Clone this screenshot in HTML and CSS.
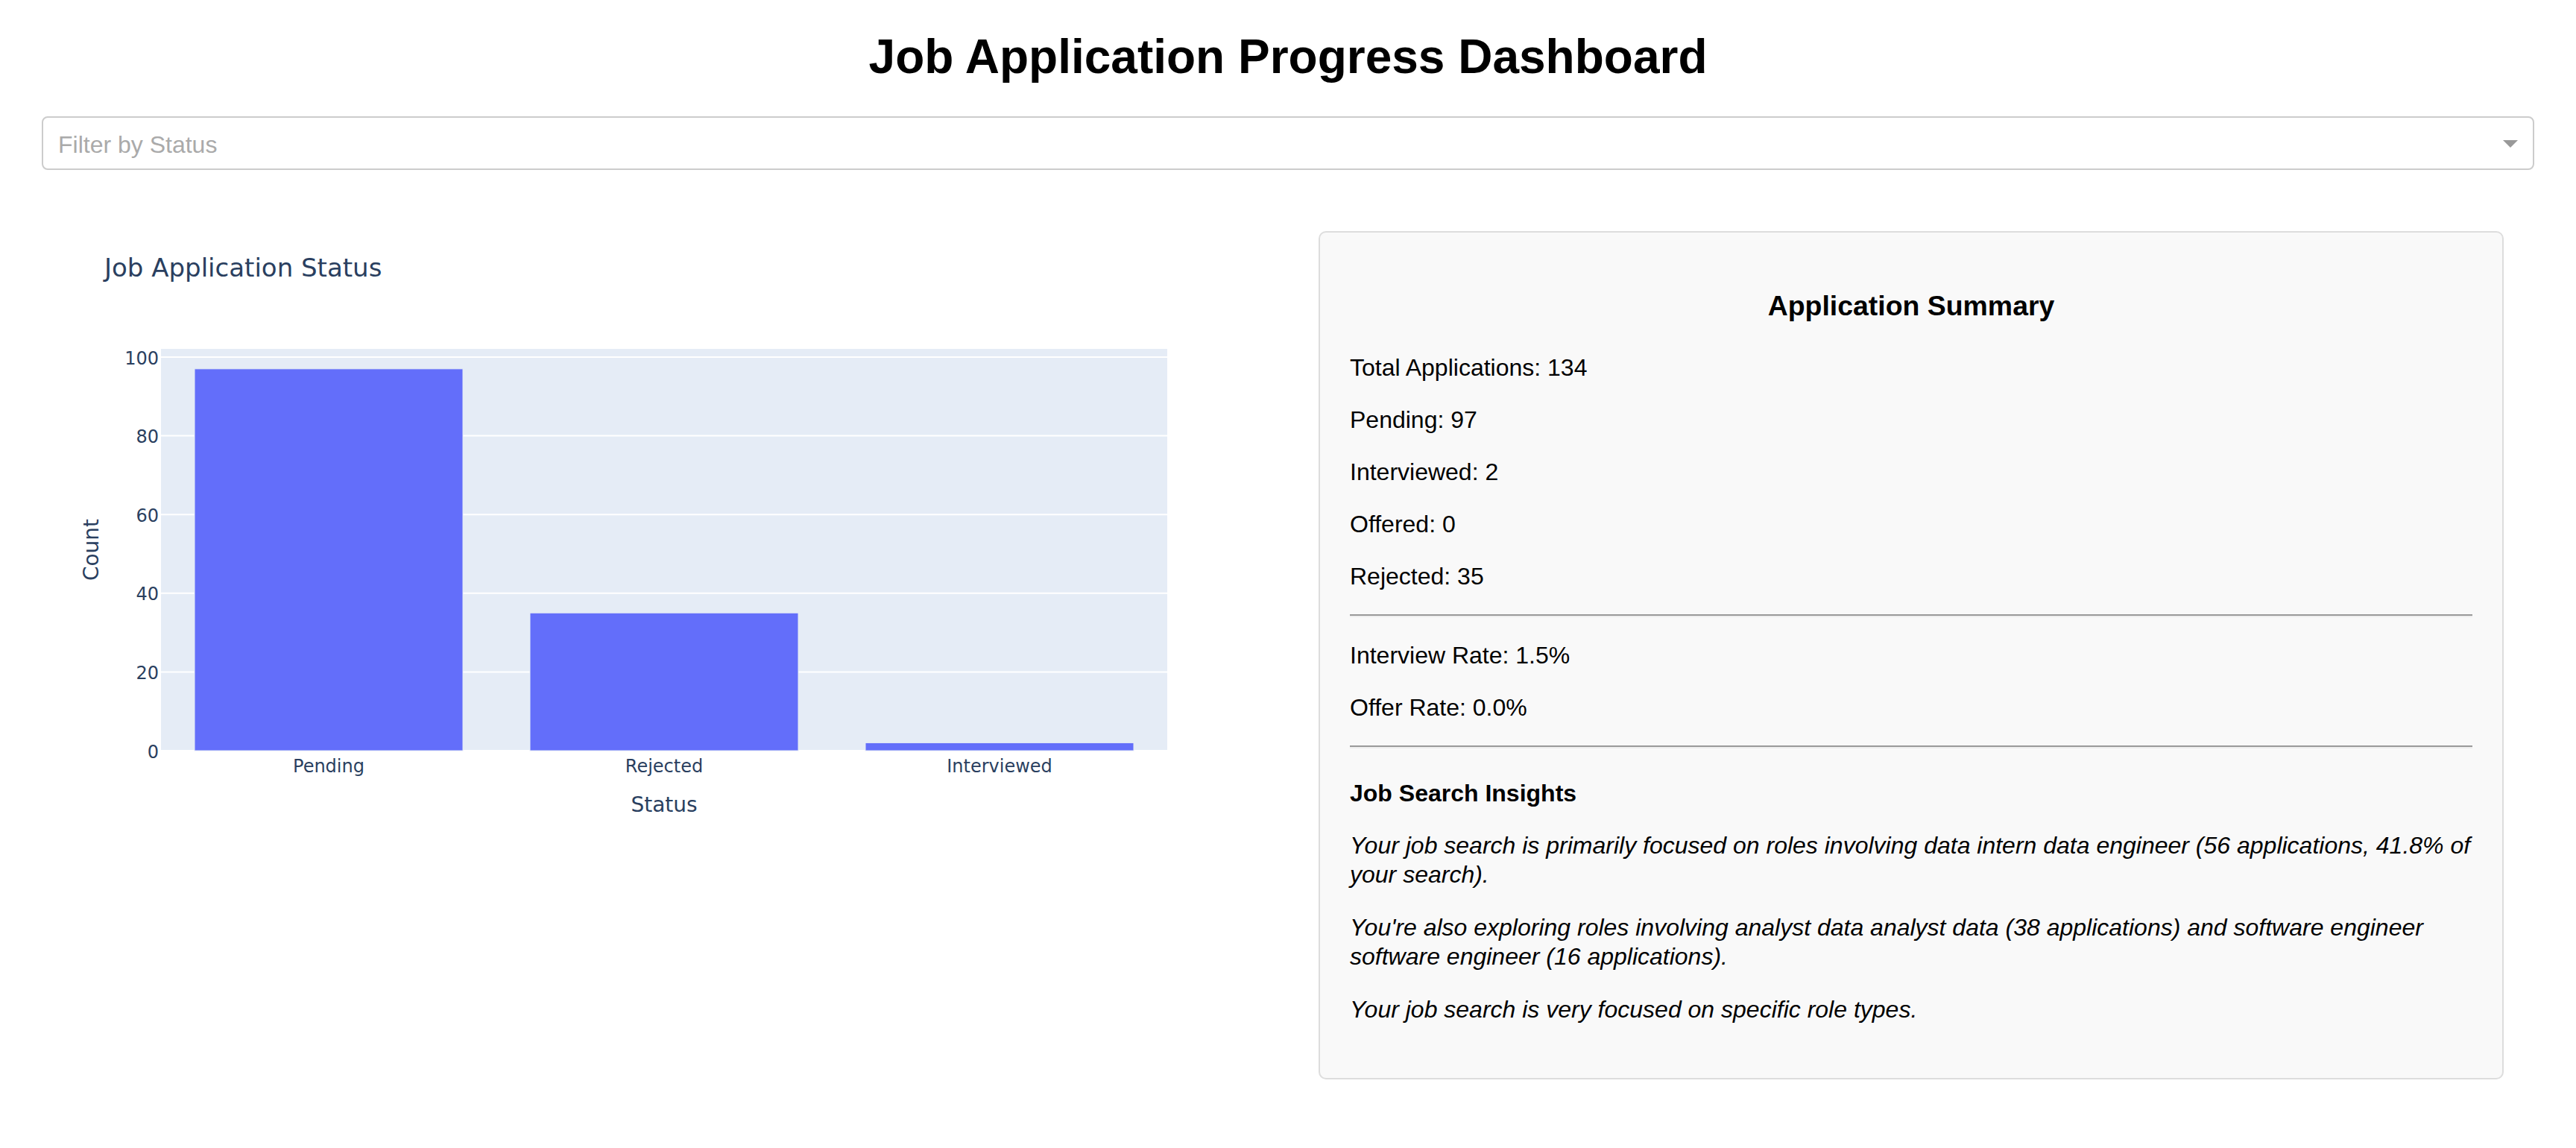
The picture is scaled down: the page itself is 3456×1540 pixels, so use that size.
FILE: index.html
```html
<!DOCTYPE html>
<html lang="en">
<head>
<meta charset="utf-8">
<title>Job Application Progress Dashboard</title>
<link rel="stylesheet" href="styles.css">
</head>
<body>
<div class="page">
  <h1 class="title">Job Application Progress Dashboard</h1>
  <div class="dropdown">
    <span class="placeholder">Filter by Status</span>
    <span class="arrow"></span>
  </div>
  <div class="row">
    <div class="chart">
      <svg class="chart-svg" width="1672" height="900" viewBox="0 0 1672 900" xmlns="http://www.w3.org/2000/svg">
        <rect class="plot-bg" x="160" y="200" width="1350" height="539"/>
        <g class="grid">
          <line x1="160" x2="1510" y1="633.4" y2="633.4"/>
          <line x1="160" x2="1510" y1="527.8" y2="527.8"/>
          <line x1="160" x2="1510" y1="422.2" y2="422.2"/>
          <line x1="160" x2="1510" y1="316.6" y2="316.6"/>
          <line x1="160" x2="1510" y1="211" y2="211"/>
          <line class="zero" x1="160" x2="1510" y1="739" y2="739"/>
        </g>
        <g class="bars">
          <rect x="205" y="226.8" width="360" height="512.2"/>
          <rect x="655" y="554.2" width="360" height="184.8"/>
          <rect x="1105" y="728.4" width="360" height="10.6"/>
        </g>
        <g class="yticks">
          <text x="157" y="748.5">0</text>
          <text x="157" y="642.9">20</text>
          <text x="157" y="537.3">40</text>
          <text x="157" y="431.7">60</text>
          <text x="157" y="326.1">80</text>
          <text x="157" y="220.5">100</text>
        </g>
        <g class="xticks">
          <text x="385" y="768">Pending</text>
          <text x="835" y="768">Rejected</text>
          <text x="1285" y="768">Interviewed</text>
        </g>
        <text class="axis-title xtitle" x="835" y="821">Status</text>
        <text class="axis-title ytitle" x="76" y="469.5" transform="rotate(-90 76 469.5)">Count</text>
        <text class="chart-title" x="84" y="103">Job Application Status</text>
      </svg>
    </div>
    <div class="card">
      <h3 class="card-title">Application Summary</h3>
      <p class="stat">Total Applications: 134</p>
      <p class="stat">Pending: 97</p>
      <p class="stat">Interviewed: 2</p>
      <p class="stat">Offered: 0</p>
      <p class="stat">Rejected: 35</p>
      <hr class="divider">
      <p class="stat">Interview Rate: 1.5%</p>
      <p class="stat">Offer Rate: 0.0%</p>
      <hr class="divider">
      <h4 class="insights-title">Job Search Insights</h4>
      <p class="insight">Your job search is primarily focused on roles involving data intern data engineer (56 applications, 41.8% of your search).</p>
      <p class="insight">You're also exploring roles involving analyst data analyst data (38 applications) and software engineer software engineer (16 applications).</p>
      <p class="insight">Your job search is very focused on specific role types.</p>
    </div>
  </div>
</div>
</body>
</html>
```

FILE: styles.css
```css
html, body {
  margin: 0;
  padding: 0;
  background: #ffffff;
}

body {
  font-family: "Liberation Sans", Arial, Helvetica, sans-serif;
  color: #000000;
}

.page {
  padding: 0 56px;
}

.title {
  font-size: 64px;
  font-weight: bold;
  line-height: 74px;
  margin: 39px 0 43px;
  text-align: center;
}

.dropdown {
  height: 72px;
  box-sizing: border-box;
  border: 2px solid #cccccc;
  border-radius: 8px;
  background: #ffffff;
  display: flex;
  align-items: center;
  justify-content: space-between;
  padding: 0 20px 0 20px;
}

.placeholder {
  font-size: 32px;
  line-height: 64px;
  padding-top: 4px;
  color: #aaaaaa;
}

.arrow {
  width: 0;
  height: 0;
  border-style: solid;
  border-width: 10px 10px 0 10px;
  border-color: #999999 transparent transparent transparent;
  margin-top: 2px;
}

.row {
  display: flex;
  align-items: flex-start;
  margin-top: 40px;
}

.chart {
  flex: none;
  width: 1672px;
  height: 900px;
}

.chart-svg {
  display: block;
}

.plot-bg {
  fill: #e5ecf6;
}

.grid line {
  stroke: #ffffff;
  stroke-width: 2;
}

.grid .zero {
  stroke-width: 2;
}

.bars rect {
  fill: #636efa;
  stroke: #e5ecf6;
  stroke-width: 1;
}

.chart-svg text {
  font-family: "DejaVu Sans", Verdana, sans-serif;
  fill: #2a3f5f;
}

.yticks text {
  font-size: 24px;
  text-anchor: end;
}

.xticks text {
  font-size: 24px;
  text-anchor: middle;
}

.axis-title {
  font-size: 28px;
  text-anchor: middle;
}

.chart-title {
  font-size: 34px;
}

.card {
  flex: none;
  box-sizing: border-box;
  width: 1590px;
  margin-top: 42px;
  margin-left: 41px;
  padding: 40px;
  border: 2px solid #dddddd;
  border-radius: 10px;
  background: #f9f9f9;
}

.card-title {
  font-size: 37.44px;
  font-weight: bold;
  line-height: 43px;
  margin: 37.44px 0 42px;
  text-align: center;
}

.stat {
  font-size: 32px;
  line-height: 38px;
  margin: 32px 0;
}

.divider {
  height: 0;
  border: 0;
  border-top: 2px solid #9a9a9a;
  border-bottom: 2px solid #eeeeee;
  margin: 16px 0;
}

.insights-title {
  font-size: 32px;
  font-weight: bold;
  line-height: 38px;
  margin: 41px 0 32px;
}

.insight {
  font-size: 32px;
  line-height: 39px;
  font-style: italic;
  margin: 32px 0;
}
```
